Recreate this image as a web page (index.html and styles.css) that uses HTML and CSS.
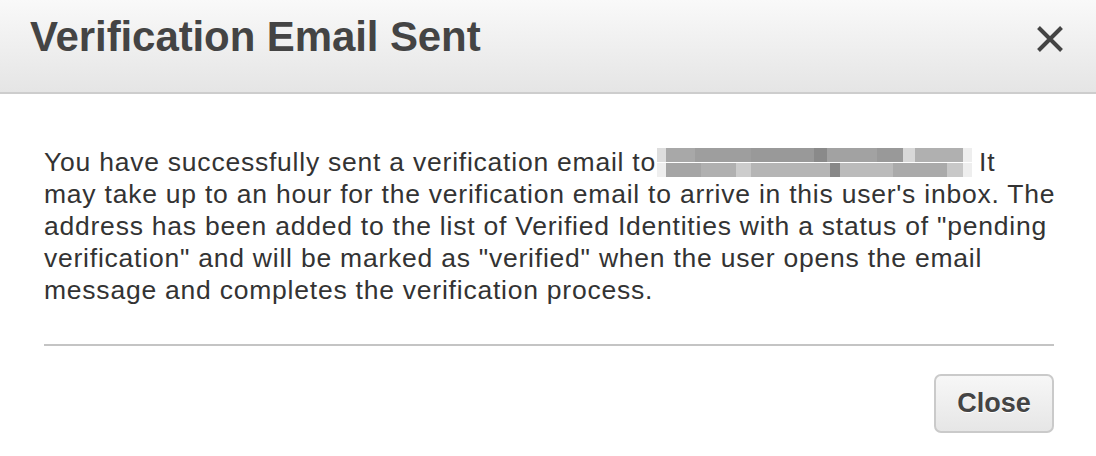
FILE: index.html
```html
<!DOCTYPE html>
<html>
<head>
<meta charset="utf-8">
<link rel="stylesheet" href="styles.css">
</head>
<body>
<div class="dialog">
  <header class="dialog-header">
    <h1 class="dialog-title">Verification Email Sent</h1>
    <button class="dialog-x" aria-label="Close">
      <svg width="28" height="28" viewBox="0 0 28 28"><path d="M2.5 2.5 L25.5 25.5 M25.5 2.5 L2.5 25.5" stroke="#444" stroke-width="4" stroke-linecap="butt"/></svg>
    </button>
  </header>
  <div class="dialog-body">
    <p class="message">You have successfully sent a verification email to<span class="redacted"><span class="px r1"></span><span class="px r2"></span></span>It<br>may take up to an hour for the verification email to arrive in this user's inbox. The<br>address has been added to the list of Verified Identities with a status of "pending<br>verification" and will be marked as "verified" when the user opens the email<br>message and completes the verification process.</p>
    <hr class="divider">
    <div class="actions">
      <button class="btn">Close</button>
    </div>
  </div>
</div>
</body>
</html>
```

FILE: styles.css
```css
* { box-sizing: border-box; }
html, body { margin: 0; padding: 0; background: #fff; }
body { font-family: "Liberation Sans", Arial, sans-serif; width: 1096px; height: 456px; overflow: hidden; }
.dialog { width: 1096px; }
.dialog-header {
  height: 94px;
  background: linear-gradient(#f9f9f9, #e5e5e5);
  border-bottom: 2px solid #cdcdcd;
  display: flex;
  align-items: flex-start;
  justify-content: space-between;
  padding: 0 32px 0 30px;
}
.dialog-title {
  margin: 12px 0 0 0;
  font-size: 42px;
  font-weight: bold;
  color: #444;
  line-height: 50px;
  letter-spacing: -0.1px;
}
.dialog-x {
  margin-top: 25px;
  border: 0;
  background: none;
  padding: 0;
  width: 28px;
  height: 28px;
  display: block;
}
.dialog-x svg { display: block; }
.dialog-body { padding: 0 42px 0 44px; }
.message {
  margin: 52px 0 0 0;
  font-size: 26.5px;
  line-height: 32px;
  color: #333;
  white-space: nowrap;
  letter-spacing: 0.77px;
}
.redacted {
  display: inline-block;
  vertical-align: -7px;
  width: 315px;
  height: 30px;
  margin: 0 7px 0 1px;
}
.px { display: block; height: 14px; }
.r1 { background: linear-gradient(90deg, #ddd 0 3%, #a8a8a8 3% 12%, #9e9e9e 12% 30%, #999 30% 50%, #8a8a8a 50% 54%, #a2a2a2 54% 70%, #999 70% 78%, #d8d8d8 78% 82%, #b0b0b0 82% 97%, #eee 97%); }
.r2 { background: linear-gradient(90deg, #eee 0 3%, #a5a5a5 3% 14%, #b0b0b0 14% 25%, #ccc 25% 30%, #b5b5b5 30% 55%, #888 55% 58%, #bbb 58% 75%, #aaa 75% 92%, #c8c8c8 92% 97%, #eee 97%); margin-top: 1px; }
.divider {
  margin: 38px 0 0 0;
  border: 0;
  height: 2px;
  background: #c4c4c4;
}
.actions {
  display: flex;
  justify-content: flex-end;
  padding-top: 28px;
}
.btn {
  width: 120px;
  height: 59px;
  border: 2px solid #cacaca;
  border-radius: 7px;
  background: linear-gradient(#f7f7f7, #e6e6e6);
  font-family: "Liberation Sans", Arial, sans-serif;
  font-weight: bold;
  font-size: 27px;
  color: #444;
  text-shadow: 0 1px 0 #fff;
  padding: 0;
}
```
